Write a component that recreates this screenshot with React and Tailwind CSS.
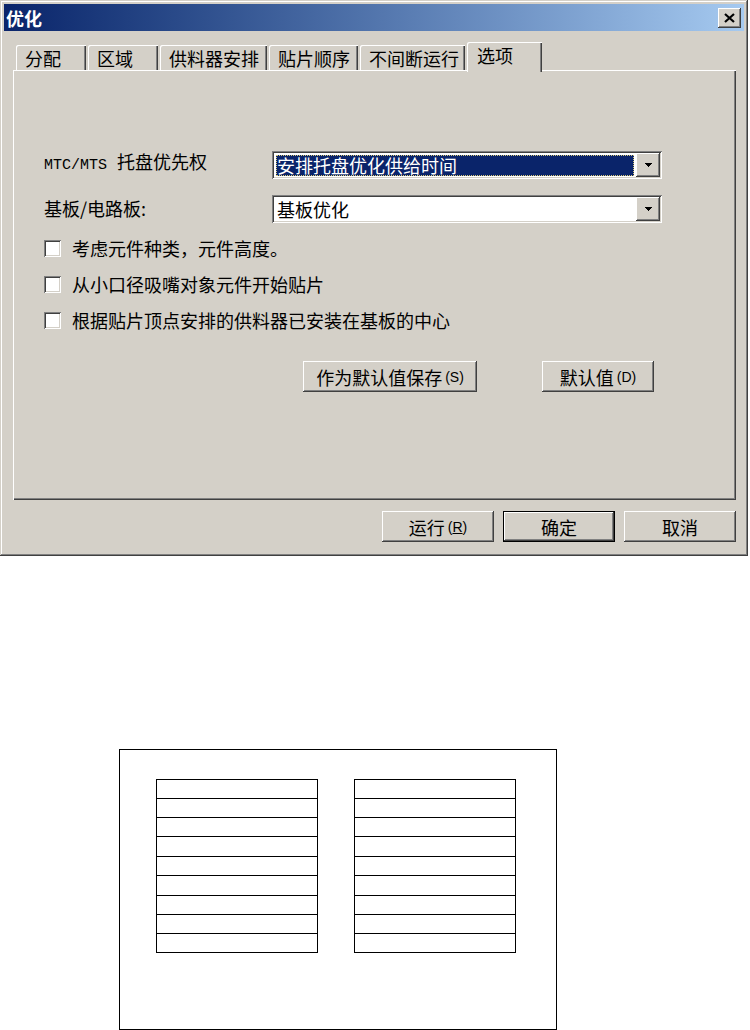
import React from "react";

const raised =
  "shadow-[inset_-1px_-1px_#404040,inset_1px_1px_#ffffff,inset_-2px_-2px_#808080,inset_2px_2px_#d4d0c8]";
const sunken =
  "shadow-[inset_1px_1px_#808080,inset_-1px_-1px_#ffffff,inset_2px_2px_#404040,inset_-2px_-2px_#d4d0c8]";

const tabs = [
  { label: "分配", width: "w-[70px]" },
  { label: "区域", width: "w-[70px]" },
  { label: "供料器安排", width: "w-[107px]" },
  { label: "贴片顺序", width: "w-[89px]" },
  { label: "不间断运行", width: "w-[105px]" },
  { label: "选项", width: "w-[75px]", active: true },
];

const options = [
  "考虑元件种类，元件高度。",
  "从小口径吸嘴对象元件开始贴片",
  "根据贴片顶点安排的供料器已安装在基板的中心",
];

const rowHeights = ["h-[18px]", "h-[19px]", "h-[19px]", "h-[20px]", "h-[19px]", "h-[20px]", "h-[19px]", "h-[19px]", "h-[19px]"];

function Tab({ label, width, active }) {
  if (active) {
    return (
      <div
        className={`relative z-10 ml-[2px] mb-[-2px] flex h-[30px] ${width} items-center rounded-tl-[2px] bg-[#d4d0c8] pb-[4px] pl-[10px] shadow-[inset_1px_1px_#ffffff,inset_-1px_0_#404040,inset_-2px_0_#808080]`}
      >
        {label}
      </div>
    );
  }
  return (
    <div
      className={`ml-[2px] flex h-[25px] ${width} items-center rounded-tl-[2px] pl-[9px] shadow-[inset_1px_1px_#ffffff,inset_-1px_0_#404040,inset_-2px_0_#808080] first:ml-0`}
    >
      {label}
    </div>
  );
}

function Arrow() {
  return (
    <svg width="7" height="4" viewBox="0 0 7 4">
      <path d="M0 0h7v1h-1v1h-1v1h-1v1h-1v-1h-1v-1h-1v-1h-1z" fill="#000" />
    </svg>
  );
}

function Combo({ value, selected }) {
  return (
    <div className={`flex h-[28px] w-[390px] bg-white p-[2px] ${sunken}`}>
      <div className="flex flex-1 items-center pl-[2px] pr-[2px]">
        {selected ? (
          <span className="flex h-[21px] flex-1 items-center border border-dotted border-[#d8c878] bg-[#0a246a] text-white">
            {value}
          </span>
        ) : (
          <span className="pl-[1px]">{value}</span>
        )}
      </div>
      <div className={`flex w-[24px] items-center justify-center bg-[#d4d0c8] ${raised}`}>
        <Arrow />
      </div>
    </div>
  );
}

function Button({ children, width = "w-[112px]", isDefault }) {
  return (
    <div
      className={`flex h-[31px] ${width} items-center justify-center bg-[#d4d0c8] ${raised} ${isDefault ? "border border-black" : ""}`}
    >
      {children}
    </div>
  );
}

function Key({ children }) {
  return <span className="ml-[3px] font-['Liberation_Sans',sans-serif] text-[14px]">{children}</span>;
}

function PartTable() {
  return (
    <div className="flex w-[162px] flex-col border border-black">
      {rowHeights.map((h, i) => (
        <div key={i} className={`${h} ${i > 0 ? "border-t border-black" : ""}`} />
      ))}
    </div>
  );
}

export default function App() {
  return (
    <div className="min-h-[1030px] w-[750px] bg-white font-['Noto_Sans_CJK_SC',sans-serif] text-[18px] leading-[20px] text-black">
      {/* dialog */}
      <div
        className={`flex h-[556px] w-[748px] flex-col bg-[#d4d0c8] p-[4px] shadow-[inset_-1px_-1px_#404040,inset_1px_1px_#d4d0c8,inset_-2px_-2px_#808080,inset_2px_2px_#ffffff]`}
      >
        <div className="flex h-[27px] items-center justify-between bg-linear-to-r from-[#0a246a] to-[#a6caf0] pl-[2px] pr-[3px]">
          <span className="font-bold text-white">优化</span>
          <div className={`flex h-[20px] w-[23px] items-center justify-center bg-[#d4d0c8] ${raised}`}>
            <svg width="11" height="10" viewBox="0 0 11 10">
              <path d="M1 1l9 8M10 1l-9 8" stroke="#000" strokeWidth="2.2" />
            </svg>
          </div>
        </div>

        <div className="mt-[11px] flex h-[28px] items-end pl-[12px]">
          {tabs.map((t) => (
            <Tab key={t.label} {...t} />
          ))}
        </div>

        <div className="ml-[9px] flex h-[430px] w-[723px] flex-col pl-[31px] shadow-[inset_1px_1px_#ffffff,inset_-1px_-1px_#404040,inset_-2px_-2px_#808080]">
          <div className="mt-[81px] flex items-center">
            <span className="flex w-[228px] items-baseline pb-[3px]">
              <span className="font-['Liberation_Mono',monospace] text-[15px]">MTC/MTS</span>
              <span className="ml-[10px]">托盘优先权</span>
            </span>
            <Combo value="安排托盘优化供给时间" selected />
          </div>
          <div className="mt-[16px] flex items-center">
            <span className="w-[228px] pb-[3px]">基板/电路板:</span>
            <Combo value="基板优化" />
          </div>

          {options.map((o, i) => (
            <div key={o} className={`${i === 0 ? "mt-[15px]" : "mt-[16px]"} flex h-[20px] items-center`}>
              <span className={`h-[17px] w-[17px] bg-white ${sunken}`} />
              <span className="ml-[11px]">{o}</span>
            </div>
          ))}

          <div className="mt-[31px] flex pl-[259px]">
            <Button width="w-[174px]">
              作为默认值保存<Key>(S)</Key>
            </Button>
            <div className="ml-[65px]">
              <Button>
                默认值<Key>(D)</Key>
              </Button>
            </div>
          </div>
        </div>

        <div className="mr-[8px] mt-[11px] flex justify-end gap-[9px]">
          <Button>
            运行<Key>(<span className="underline">R</span>)</Key>
          </Button>
          <Button isDefault>确定</Button>
          <Button>取消</Button>
        </div>
      </div>

      {/* layout diagram */}
      <div className="ml-[119px] mt-[193px] flex h-[281px] w-[438px] items-start gap-[36px] border border-black pl-[36px] pt-[29px]">
        <PartTable />
        <PartTable />
      </div>
    </div>
  );
}
